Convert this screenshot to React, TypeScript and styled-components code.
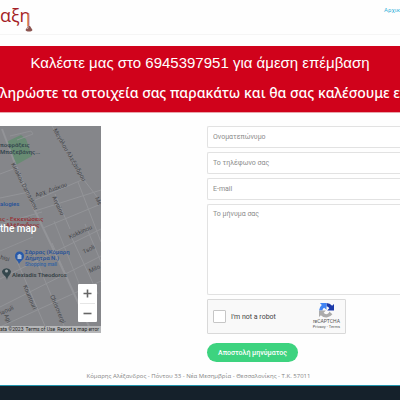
import React from "react";
import styled, { createGlobalStyle } from "styled-components";

const GlobalStyle = createGlobalStyle`
  * { box-sizing: border-box; }
  body {
    margin: 0;
    background: #fefefe;
    color: #858585;
    font-family: Roboto, "Liberation Sans", sans-serif;
    overflow-x: hidden;
  }
`;

const Page = styled.div`
  display: flex;
  flex-direction: column;
  min-height: 100vh;
  overflow: hidden;
`;

const Header = styled.header`
  display: flex;
  justify-content: space-between;
  align-items: flex-start;
  height: 35px;
  border-bottom: 1px solid #f5f5f5;
`;

const Logo = styled.a`
  display: flex;
  align-items: flex-start;
  padding-top: 4px;
  color: #a51e27;
  font-family: "Open Sans", sans-serif;
  font-size: 18px;
  line-height: 22px;
  text-decoration: none;
`;

const Plunger = styled.svg`
  width: 8px;
  height: 20px;
  margin: 8px 0 0 -6px;
`;

const NavLink = styled.a`
  padding-top: 5px;
  color: #35b3da;
  font-size: 6px;
  line-height: 9px;
  text-decoration: none;
`;

const Banner = styled.section`
  margin-top: 11px;
  padding: 7px 0 9px;
  background: #d0021b;
  border-bottom: 1px solid #e8a5ab;
  color: #fff;
  text-align: center;
  white-space: nowrap;
`;

const CallLine = styled.h1`
  margin: 0 0 10px;
  font-family: "Liberation Sans", sans-serif;
  font-size: 15px;
  font-weight: 400;
  line-height: 20px;
`;

const FormLine = styled.p`
  margin: 0;
  font-family: "Noto Sans", sans-serif;
  font-size: 14px;
  font-weight: 500;
  line-height: 20px;
`;

const Columns = styled.main`
  display: grid;
  grid-template-columns: 101px minmax(0, 1fr);
  column-gap: 106px;
  align-items: start;
  margin-top: 13px;
`;

const MapBox = styled.div`
  position: relative;
  height: 207px;
  overflow: hidden;
  background: #85868a;
`;

const MapDrawing = styled.svg`
  display: block;
  width: 100%;
  height: 100%;
`;

const MapHint = styled.span`
  position: absolute;
  top: 97px;
  left: 0;
  color: #fff;
  font-size: 10px;
  font-weight: 500;
  line-height: 12px;
`;

const ZoomControl = styled.div`
  position: absolute;
  right: 4px;
  bottom: 11px;
  display: flex;
  flex-direction: column;
  width: 19px;
  padding: 0 2px;
  background: #fff;
  border-radius: 1px;
`;

const ZoomButton = styled.button`
  display: grid;
  place-items: center;
  height: 19px;
  padding: 0;
  border: 0;
  background: none;
  color: #666;

  & + & { border-top: 1px solid #e6e6e6; }
`;

const MapLegend = styled.div`
  position: absolute;
  inset: auto 0 0 0;
  display: flex;
  justify-content: space-between;
  height: 7px;
  padding-right: 2px;
  background: #b5b6b8;
  color: #222;
  font-size: 5px;
  line-height: 7px;
  white-space: nowrap;
`;

const LegendLink = styled.a`
  color: inherit;
  text-decoration: none;
`;

const ContactForm = styled.form`
  display: flex;
  flex-direction: column;
  align-items: flex-start;
`;

const Field = styled.input`
  width: 100%;
  height: 22px;
  margin: 0 0 4px;
  padding: 0 5px;
  border: 1px solid #e2e2e2;
  border-right: 0;
  border-radius: 2px 0 0 2px;
  background: #fff;
  font-family: inherit;
  font-size: 7px;
  &::placeholder { color: #8c8c8c; opacity: 1; }
`;

const Message = styled(Field)`
  display: block;
  height: 91px;
  padding: 5px;
  line-height: 9px;
  resize: none;
`;

const Captcha = styled.div`
  display: flex;
  align-items: center;
  width: 139px;
  height: 35px;
  padding: 0 5px;
  background: #f9f9f9;
  border: 1px solid #d9d9d9;
  border-radius: 1px;
`;

const CaptchaLabel = styled.label`
  display: flex;
  align-items: center;
  gap: 5px;
  flex: 1;
  color: #444;
  font-size: 7px;
`;

const Check = styled.input`
  appearance: none;
  width: 13px;
  height: 13px;
  margin: 0;
  background: #fff;
  border: 1px solid #c6c6c6;
  border-radius: 1px;
`;

const CaptchaBrand = styled.div`
  display: flex;
  flex-direction: column;
  align-items: center;
  color: #555;
  font-size: 5px;
  line-height: 6px;
  white-space: nowrap;
`;

const CaptchaTerms = styled.span`
  font-size: 4px;
`;

const Submit = styled.button`
  height: 19px;
  margin-top: 9px;
  padding: 0 11px;
  border: 0;
  border-radius: 10px;
  background: #3dd37f;
  color: #fff;
  font-family: inherit;
  font-size: 7px;
  font-weight: 500;
`;

const Address = styled.p`
  margin: 9px 0 4px;
  padding-right: 3px;
  font-family: "Open Sans", sans-serif;
  font-size: 6px;
  line-height: 10px;
  text-align: center;
`;

const Footer = styled.footer`
  flex: 1;
  min-height: 15px;
  background: #15212b;
  border-top: 1px solid #2195ad;
`;

const PlungerIcon = () => (
  <Plunger viewBox="0 0 8 20" aria-hidden="true">
    <path d="M3.5 1V15" stroke="#cf6d65" strokeWidth="1.3" />
    <path d="M3 14h2l2.5 4c-1 2-6 2-7 0Z" fill="#8c5550" />
    <path d="M3 14.5h1L3 17H1.5Z" fill="#d3aaa5" />
  </Plunger>
);

const CaptchaIcon = () => (
  <svg width="15" height="15" viewBox="0 0 64 64" aria-hidden="true">
    <path d="M64 32V4l-8 8A32 32 0 0 0 32 0v15c5 0 9 2 12 7l-9 10Z" fill="#1c3aa9" />
    <path d="M32 0H4l8 8A32 32 0 0 0 0 32h15c0-5 2-9 7-12l10 9V0Z" fill="#4285f4" />
    <path d="M0 32v28l8-8a32 32 0 0 0 49-4L44 36c-3 14-18 15-24 6l9-10Z" fill="#ababab" />
  </svg>
);

const CityMap = () => (
  <MapDrawing viewBox="0 0 101 207" preserveAspectRatio="xMinYMin slice" fontFamily="Roboto, sans-serif">
    <path d="M6 16 21 9l5 4 6 17-16 9Z" fill="#688b73" />
    <g fill="none" stroke="#939498">
      <path d="M2 3 14 35 35 85 66 150 92 207" strokeWidth="2" />
      <path d="M52 0 67 26 84 54 101 76M33 75 84 53M55 68 70 103M78 56 101 116M0 48 16 42M0 72 29 66M0 98 42 86M35 85 101 64M43 102 101 78M0 153 101 103M0 181 101 130M0 201 101 155M17 135 48 207M33 126 67 207M52 117 81 184M70 108 98 168M85 98 101 136" strokeWidth="1" />
      <path d="M10 10 31 5 33 8 17 14M0 125 33 111M54 95 82 165" strokeWidth=".8" />
    </g>
    <g fill="#46474b" fontSize="6">
      <text transform="translate(53 4) rotate(60)">Μεγάλου Αλεξάνδρου</text>
      <text transform="translate(11 38) rotate(63)">Kiriakou Damaskou</text>
      <text transform="translate(36 71) rotate(-19)">Αρχ. Διάκου</text>
      <text transform="translate(52 71) rotate(65)">Αιγαίου</text>
      <text transform="translate(95 72) rotate(65)">Με</text>
      <text transform="translate(70 113) rotate(-25)">Kokkinou</text>
      <text transform="translate(84 128) rotate(-27)">Tsoli</text>
      <text transform="translate(90 147) rotate(-25)">Milo</text>
      <text transform="translate(0 133) rotate(15)">hisi</text>
      <text transform="translate(23 160) rotate(67)">Kountouri</text>
      <text transform="translate(50 170) rotate(67)">Chrisovergi</text>
      <text transform="translate(1 189) rotate(-24)">iaouli</text>
      <text transform="translate(4 189) rotate(67)">Agi</text>
    </g>
    <g fontSize="6" fontWeight="500">
      <text x="0" y="21" fill="#31444c">ποφράξεις</text>
      <text x="0" y="28" fill="#31444c">Μπαξεβάνης...</text>
      <text x="0" y="80" fill="#234f99">alogies</text>
      <text x="0" y="95" fill="#972d32">ις - Εκκενώσεις</text>
      <text x="6" y="101" fill="#972d32">Αλέξανδρος</text>
      <text x="25" y="128" fill="#234f99">Σάρρας (Κόμαρη</text>
      <text x="25" y="134" fill="#234f99">Δήμητρα Ν.)</text>
      <text x="25" y="140" fill="#3162a4" fontSize="5">Shopping mall</text>
      <text x="12" y="151" fill="#303b40">Alexiadis Theodoros</text>
    </g>
    <path d="M19 138c-1-4-4-4-4-8a4 4 0 0 1 9 0c0 4-3 4-5 8Z" fill="#285aaa" />
    <path d="M17.5 129h4v4h-4Zm1 0v-1h2v1" fill="#aabbd4" />
    <path d="M7 154c-1-5-5-5-5-9a5 5 0 0 1 9 0c0 4-3 4-4 9Z" fill="#35474d" />
    <circle cx="6.5" cy="145" r="1.5" fill="#a0a7aa" />
  </MapDrawing>
);

export default function App() {
  return (
    <>
      <GlobalStyle />
      <Page>
        <Header>
          <Logo href="#">αξη<PlungerIcon /></Logo>
          <NavLink href="#">Αρχικ</NavLink>
        </Header>
        <Banner>
          <CallLine>Καλέστε μας στο 6945397951 για άμεση επέμβαση</CallLine>
          <FormLine>ληρώστε τα στοιχεία σας παρακάτω και θα σας καλέσουμε ε</FormLine>
        </Banner>
        <Columns>
          <MapBox>
            <CityMap />
            <MapHint>the map</MapHint>
            <ZoomControl>
              <ZoomButton type="button" aria-label="Zoom in">
                <svg width="9" height="9" viewBox="0 0 9 9"><path d="M4.5 .5v8M.5 4.5h8" stroke="currentColor" strokeWidth="1.6" /></svg>
              </ZoomButton>
              <ZoomButton type="button" aria-label="Zoom out">
                <svg width="9" height="9" viewBox="0 0 9 9"><path d="M.5 4.5h8" stroke="currentColor" strokeWidth="1.6" /></svg>
              </ZoomButton>
            </ZoomControl>
            <MapLegend>
              <span>ata ©2023</span>
              <LegendLink href="#">Terms of Use</LegendLink>
              <LegendLink href="#">Report a map error</LegendLink>
            </MapLegend>
          </MapBox>
          <ContactForm>
            <Field aria-label="Ονοματεπώνυμο" placeholder="Ονοματεπώνυμο" />
            <Field type="tel" aria-label="Το τηλέφωνο σας" placeholder="Το τηλέφωνο σας" />
            <Field type="email" aria-label="E-mail" placeholder="E-mail" />
            <Message as="textarea" aria-label="Το μήνυμα σας" placeholder="Το μήνυμα σας" />
            <Captcha>
              <CaptchaLabel><Check type="checkbox" />I'm not a robot</CaptchaLabel>
              <CaptchaBrand>
                <CaptchaIcon />
                <span>reCAPTCHA</span>
                <CaptchaTerms>Privacy - Terms</CaptchaTerms>
              </CaptchaBrand>
            </Captcha>
            <Submit type="submit">Αποστολή μηνύματος</Submit>
          </ContactForm>
        </Columns>
        <Address>Κόμαρης Αλέξανδρος - Πόντου 33 - Νέα Μεσημβρία - Θεσσαλονίκης - Τ.Κ. 57011</Address>
        <Footer />
      </Page>
    </>
  );
}
